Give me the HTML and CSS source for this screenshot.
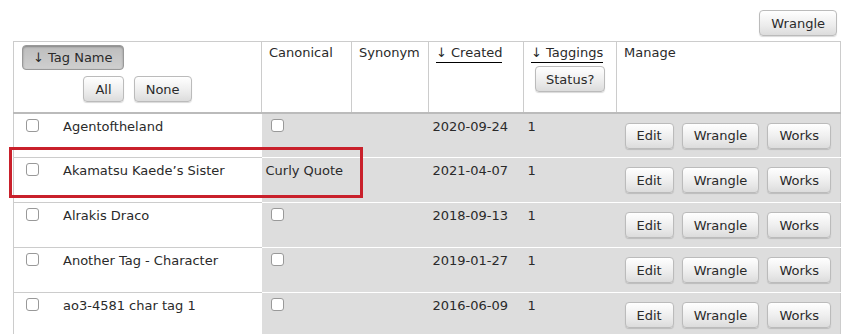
FILE: index.html
```html
<!DOCTYPE html>
<html lang="en">
  <head>
    <meta charset="UTF-8" />
    <title>Wrangle Tags</title>
    <link rel="stylesheet" href="styles.css">
  </head>
  <body>
    <div class="actions">
      <button class="btn">Wrangle</button>
    </div>

    <table class="tags">
      <thead>
        <tr>
          <th class="col-name">
            <button class="btn btn-current">&#8595; Tag Name</button>
            <div class="select-all">
              <button class="btn">All</button>
              <button class="btn">None</button>
            </div>
          </th>
          <th class="col-canonical">Canonical</th>
          <th class="col-synonym">Synonym</th>
          <th class="col-created"><span class="sort">&#8595; Created</span></th>
          <th class="col-taggings">
            <span class="sort">&#8595; Taggings</span>
            <button class="btn">Status?</button>
          </th>
          <th class="col-manage">Manage</th>
        </tr>
      </thead>
      <tbody>
        <tr>
          <td class="col-name"><span class="check"></span>Agentoftheland</td>
          <td><span class="check"></span></td>
          <td></td>
          <td>2020-09-24</td>
          <td>1</td>
          <td class="manage"><button class="btn">Edit</button><button class="btn">Wrangle</button><button class="btn">Works</button></td>
        </tr>
        <tr class="flagged">
          <td class="col-name"><span class="check"></span>Akamatsu Kaede’s Sister</td>
          <td>Curly Quote</td>
          <td></td>
          <td>2021-04-07</td>
          <td>1</td>
          <td class="manage"><button class="btn">Edit</button><button class="btn">Wrangle</button><button class="btn">Works</button></td>
        </tr>
        <tr>
          <td class="col-name"><span class="check"></span>Alrakis Draco</td>
          <td><span class="check"></span></td>
          <td></td>
          <td>2018-09-13</td>
          <td>1</td>
          <td class="manage"><button class="btn">Edit</button><button class="btn">Wrangle</button><button class="btn">Works</button></td>
        </tr>
        <tr>
          <td class="col-name"><span class="check"></span>Another Tag - Character</td>
          <td><span class="check"></span></td>
          <td></td>
          <td>2019-01-27</td>
          <td>1</td>
          <td class="manage"><button class="btn">Edit</button><button class="btn">Wrangle</button><button class="btn">Works</button></td>
        </tr>
        <tr>
          <td class="col-name"><span class="check"></span>ao3-4581 char tag 1</td>
          <td><span class="check"></span></td>
          <td></td>
          <td>2016-06-09</td>
          <td>1</td>
          <td class="manage"><button class="btn">Edit</button><button class="btn">Wrangle</button><button class="btn">Works</button></td>
        </tr>
      </tbody>
    </table>
  </body>
</html>
```

FILE: styles.css
```css
* {
  box-sizing: border-box;
  margin: 0;
  padding: 0;
}

body {
  font-family: "DejaVu Sans", Verdana, sans-serif;
  font-size: 13px;
  color: #2a2a2a;
  background: #fff;
  padding: 10px 14px 0 13px;
}

.actions {
  text-align: right;
  height: 31px;
  padding-right: 4px;
}

.btn {
  font-family: inherit;
  font-size: 13px;
  color: #2a2a2a;
  background: linear-gradient(#fff 0%, #ececec 60%, #dcdcdc 100%);
  border: 1px solid #bbb;
  border-radius: 4px;
  box-shadow: 0 1px 1px rgba(0, 0, 0, 0.15);
  height: 26px;
  padding: 0 11px;
  cursor: pointer;
}

.btn-current {
  background: linear-gradient(#bdbdbd, #cfcfcf);
  border-color: #999;
  box-shadow: inset 0 1px 2px rgba(0, 0, 0, 0.3);
  height: 25px;
  padding: 0 10px;
}

/* table */
.tags {
  width: 828px;
  table-layout: fixed;
  border-collapse: collapse;
  border: 1px solid #ccc;
}

.tags th {
  font-weight: normal;
  text-align: left;
  vertical-align: top;
  border-left: 1px solid #ccc;
  border-bottom: 2px solid #bbb;
  padding: 3px 7px 0 7px;
  height: 71px;
  background: #fff;
}

.tags th.col-name {
  padding: 3px 8px 0 8px;
  width: 248px;
}

.select-all {
  text-align: center;
  margin-top: 6px;
}

.select-all .btn {
  margin: 0 3px;
}

.col-canonical { width: 90px; }
.col-synonym { width: 77px; }
.col-created { width: 95px; }
.col-taggings { width: 93px; }

.sort {
  display: inline-block;
  border-bottom: 1px solid #000;
  padding-bottom: 2px;
}

.col-taggings .btn {
  display: block;
  margin: 3px 0 0 4px;
  padding: 0 10px;
}

.tags td {
  background: #ddd;
  border-top: 1px solid #fff;
  vertical-align: top;
  padding: 5px 3px 0 4px;
  height: 45px;
  white-space: nowrap;
}

.tags td.col-name {
  background: #fff;
  border-top: 1px solid #ccc;
  padding: 5px 0 0 12px;
}

.tags tr:first-child td {
  border-top: none;
}

.check {
  display: inline-block;
  width: 13px;
  height: 13px;
  margin-left: 5px;
  border: 1px solid #999;
  border-radius: 3px;
  background: #fff;
  vertical-align: -1px;
}

.col-name .check {
  margin: 0 24px 0 0;
}

.tags td.manage {
  padding: 9px 0 0 8px;
}

.manage .btn {
  margin-right: 8px;
}

.manage .btn:last-child {
  margin-right: 0;
}

/* highlight */
.flagged .col-name {
  position: relative;
}

.flagged .col-name::after {
  content: "";
  box-sizing: border-box;
  position: absolute;
  left: -5px;
  top: -11px;
  width: 354px;
  height: 51px;
  border: 3px solid #c9202b;
  pointer-events: none;
  z-index: 2;
}
```
